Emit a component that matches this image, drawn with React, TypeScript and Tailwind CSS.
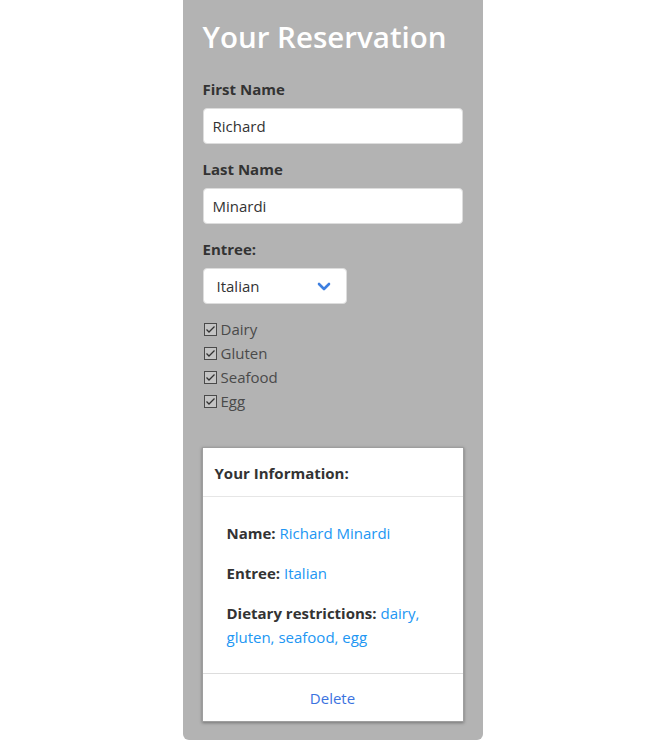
import React from "react";

const font = { fontFamily: '"Open Sans", "Noto Sans", sans-serif' };

function Check({ label }: { label: string }) {
  return (
    <div className="flex items-center h-[24px]">
      <svg width="13" height="13" viewBox="0 0 13 13" className="ml-[1px] mr-[4px]">
        <rect x="0.5" y="0.5" width="12" height="12" fill="#c4c4c4" stroke="#4a4a4a" strokeWidth="1" />
        <path d="M2.5 6.5 L5 9 L10.5 3.5" fill="none" stroke="#333" strokeWidth="1.3" />
      </svg>
      <span className="text-[15px] text-[#4a4a4a]">{label}</span>
    </div>
  );
}

export default function App() {
  return (
    <div className="w-full min-h-[741px] bg-white flex justify-center" style={font}>
      <div className="w-[300px] h-[740px] bg-[#b3b3b3] rounded-b-[6px] px-5 ml-[3px]">
        <h1 className="text-[29.5px] font-semibold text-white leading-[38px] pt-[18px] mb-[22px]">Your Reservation</h1>

        <label className="block text-[15px] font-bold text-[#333] leading-[22px] mb-[8px]">First Name</label>
        <div className="h-[36px] bg-white rounded-[4px] border border-[#ddd] flex items-center pl-[9px] text-[15px] text-[#333] mb-[14px]">Richard</div>

        <label className="block text-[15px] font-bold text-[#333] leading-[22px] mb-[8px]">Last Name</label>
        <div className="h-[36px] bg-white rounded-[4px] border border-[#ddd] flex items-center pl-[9px] text-[15px] text-[#333] mb-[14px]">Minardi</div>

        <label className="block text-[15px] font-bold text-[#333] leading-[22px] mb-[8px]">Entree:</label>
        <div className="w-[144px] h-[36px] bg-white rounded-[4px] border border-[#ddd] flex items-center justify-between pl-[13px] pr-[15px] text-[15px] text-[#333] mb-[13px]">
          <span>Italian</span>
          <svg width="14" height="9" viewBox="0 0 14 9">
            <path d="M2 2 L7 7 L12 2" fill="none" stroke="#3d7fe0" strokeWidth="2.6" strokeLinecap="round" strokeLinejoin="round" />
          </svg>
        </div>

        <Check label="Dairy" />
        <Check label="Gluten" />
        <Check label="Seafood" />
        <Check label="Egg" />

        <div className="mt-[34px] -ml-[1px] w-[262px] bg-white border border-[#9e9e9e] shadow-[0_1px_3px_rgba(0,0,0,0.35)]">
          <div className="h-[49px] border-b border-[#e6e6e6] flex items-center pl-[12px] pt-[2px] text-[15px] font-bold text-[#333]">Your Information:</div>
          <div className="px-[24px] pt-[24px] pb-[24px] text-[15px] leading-[24px] text-[#333]">
            <p className="mb-[16px]"><span className="font-bold">Name:</span> <span className="text-[#2196f3]">Richard Minardi</span></p>
            <p className="mb-[16px]"><span className="font-bold">Entree:</span> <span className="text-[#2196f3]">Italian</span></p>
            <p><span className="font-bold">Dietary restrictions:</span> <span className="text-[#2196f3]">dairy, gluten, seafood, egg</span></p>
          </div>
          <div className="h-[48px] border-t border-[#ddd] flex items-center justify-center text-[15px] text-[#3b73e0] pt-[2px]">Delete</div>
        </div>
      </div>
    </div>
  );
}
